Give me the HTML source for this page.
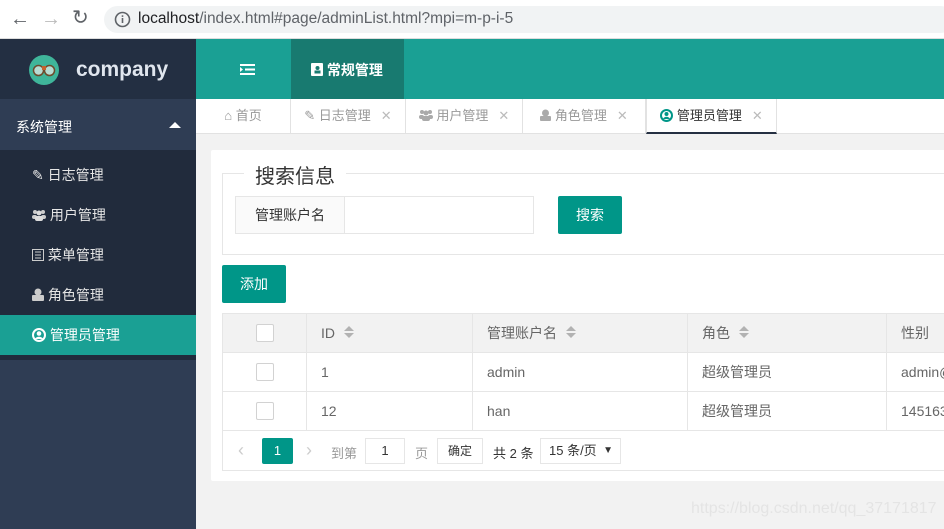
<!DOCTYPE html>
<html><head><meta charset="utf-8">
<style>
*{margin:0;padding:0;box-sizing:border-box}
body{width:944px;height:529px;overflow:hidden;position:relative;font-family:"Liberation Sans","Noto Sans CJK SC",sans-serif;font-size:14px;background:#f2f2f2;color:#333}
.abs{position:absolute}
.bar{left:0;top:0;width:944px;height:39px;background:#fff;border-bottom:1px solid #ddd}
.addr{left:104px;top:6px;width:850px;height:27px;background:#f1f3f4;border-radius:14px}
.url{left:138px;top:10px;font-size:15.5px;color:#202124}
.url span{color:#5f6368}
.logo{left:0;top:39px;width:196px;height:60px;background:#232f42}
.side{left:0;top:99px;width:196px;height:430px;background:#2f3d54}
.sub{left:0;top:150px;width:196px;height:210px;background:#212b3c}
.si{left:0;width:196px;height:40px;line-height:40px;padding-left:32px;color:#e6e6e6;font-size:14px}
.hdr{left:196px;top:39px;width:748px;height:60px;background:#1aa094}
.tabs{left:196px;top:99px;width:748px;height:35px;background:#fff;border-bottom:1px solid #e2e2e2}
.tab{top:99px;height:34px;line-height:33px;color:#999;font-size:13px;border-right:1px solid #e2e2e2;text-align:center}
.x{color:#bbb;margin-left:10px;font-size:13px}
.card{left:211px;top:150px;width:740px;height:331px;background:#fff;border-radius:2px}
.btn{background:#009688;color:#fff;text-align:center;border-radius:2px;font-size:14px}
td,th{border:1px solid #e6e6e6;height:39px;font-weight:normal;text-align:left;padding-left:14px;color:#666;font-size:14px}
th{background:#f2f2f2}
.cb{display:inline-block;width:18px;height:18px;border:1px solid #d2d2d2;border-radius:2px;background:#fff;vertical-align:middle}
.sort{display:inline-block;width:10px;height:14px;vertical-align:middle;margin-left:9px;position:relative;top:-1px}
.sort:before{content:"";position:absolute;left:0;top:0;border-left:5px solid transparent;border-right:5px solid transparent;border-bottom:5px solid #b2b2b2}
.sort:after{content:"";position:absolute;left:0;top:7px;border-left:5px solid transparent;border-right:5px solid transparent;border-top:5px solid #b2b2b2}
</style></head><body>
<div class="abs bar"></div>
<div class="abs" style="left:10px;top:9px;font-size:20px;color:#5f6368;line-height:20px">&#8592;</div>
<div class="abs" style="left:41px;top:9px;font-size:20px;color:#bbb;line-height:20px">&#8594;</div>
<div class="abs" style="left:72px;top:8px;font-size:20px;color:#5f6368;line-height:20px">&#8635;</div>
<div class="abs addr"></div>
<svg class="abs" style="left:114px;top:11px" width="17" height="17"><circle cx="8.5" cy="8.5" r="7" fill="none" stroke="#5f6368" stroke-width="1.6"/><rect x="7.7" y="7" width="1.6" height="5" fill="#5f6368"/><rect x="7.7" y="4.3" width="1.6" height="1.6" fill="#5f6368"/></svg>
<div class="abs url">localhost<span>/index.html#page/adminList.html?mpi=m-p-i-5</span></div>

<div class="abs logo"></div>
<svg class="abs" style="left:29px;top:55px" width="30" height="30"><circle cx="15" cy="15" r="15" fill="#3fb59a"/><circle cx="9.5" cy="15.5" r="5" fill="#b7dcd3" stroke="#6d4a2c" stroke-width="1.5"/><circle cx="20.5" cy="15.5" r="5" fill="#b7dcd3" stroke="#6d4a2c" stroke-width="1.5"/><rect x="13" y="11" width="4" height="4" fill="#c4622d"/></svg>
<div class="abs" style="left:76px;top:58px;font-size:21px;font-weight:bold;color:#e0e6ee">company</div>

<div class="abs side"></div>
<div class="abs" style="left:16px;top:117px;color:#fff;font-size:14px">系统管理</div>
<div class="abs" style="left:169px;top:122px;border:6px solid transparent;border-bottom:6px solid #fff;border-top:0"></div>
<div class="abs sub"></div>
<div class="abs si" style="top:155px">&#9998; 日志管理</div>
<div class="abs si" style="top:195px"><svg width="14" height="12" style="vertical-align:-1px"><circle cx="3" cy="3" r="2" fill="#ccc"/><circle cx="11" cy="3" r="2" fill="#ccc"/><circle cx="7" cy="4" r="2.5" fill="#ddd"/><rect x="0" y="6" width="5" height="4" rx="2" fill="#ccc"/><rect x="9" y="6" width="5" height="4" rx="2" fill="#ccc"/><rect x="3" y="7" width="8" height="5" rx="2" fill="#ddd"/></svg> 用户管理</div>
<div class="abs si" style="top:235px"><svg width="12" height="12" style="vertical-align:-1px"><rect x=".5" y=".5" width="11" height="11" fill="none" stroke="#ccc"/><path d="M3 3h6M3 6h6M3 9h6" stroke="#ccc"/></svg> 菜单管理</div>
<div class="abs si" style="top:275px"><svg width="12" height="13" style="vertical-align:-1px"><circle cx="6" cy="4" r="3.5" fill="#ccc"/><rect x="0" y="7" width="12" height="6" rx="1" fill="#ccc"/></svg> 角色管理</div>
<div class="abs" style="left:0;top:315px;width:196px;height:40px;background:#1aa094"></div>
<div class="abs si" style="top:315px;color:#fff"><svg width="14" height="14" style="vertical-align:-2px"><circle cx="7" cy="7" r="6" fill="none" stroke="#fff" stroke-width="2"/><circle cx="7" cy="5.5" r="2.3" fill="#fff"/><path d="M3 11c1-3 7-3 8 0" fill="#fff"/></svg> 管理员管理</div>

<div class="abs hdr"></div>
<svg class="abs" style="left:240px;top:64px" width="15" height="11"><path d="M0 1h15M5 5.5h10M0 10h15" stroke="#fff" stroke-width="2"/><path d="M0 3l3 2.5L0 8z" fill="#fff"/></svg>
<div class="abs" style="left:291px;top:39px;width:113px;height:60px;background:#187a70"></div>
<div class="abs" style="left:311px;top:60px;color:#fff;font-weight:bold;font-size:14px"><svg width="12" height="13" style="vertical-align:-1px"><rect width="12" height="13" rx="1" fill="#fff"/><circle cx="6.5" cy="5" r="2" fill="#187a70"/><rect x="3.5" y="7.5" width="6" height="3" fill="#187a70"/></svg> 常规管理</div>

<div class="abs tabs"></div>
<div class="abs tab" style="left:196px;width:95px">&#8962; 首页</div>
<div class="abs tab" style="left:291px;width:115px">&#9998; 日志管理<span class="x">✕</span></div>
<div class="abs tab" style="left:406px;width:117px"><svg width="14" height="12" style="vertical-align:-1px"><circle cx="3" cy="3" r="2" fill="#aaa"/><circle cx="11" cy="3" r="2" fill="#aaa"/><circle cx="7" cy="4" r="2.5" fill="#aaa"/><rect x="0" y="6" width="5" height="4" rx="2" fill="#aaa"/><rect x="9" y="6" width="5" height="4" rx="2" fill="#aaa"/><rect x="3" y="7" width="8" height="5" rx="2" fill="#aaa"/></svg> 用户管理<span class="x">✕</span></div>
<div class="abs tab" style="left:523px;width:123px"><svg width="11" height="12" style="vertical-align:-1px"><circle cx="5.5" cy="4" r="3.5" fill="#aaa"/><rect x="0" y="7" width="11" height="5" rx="1" fill="#aaa"/></svg> 角色管理<span class="x">✕</span></div>
<div class="abs tab" style="left:646px;width:131px;color:#333;border-left:1px solid #e2e2e2;border-bottom:2px solid #253042;height:35px"><svg width="13" height="13" style="vertical-align:-2px"><circle cx="6.5" cy="6.5" r="5.5" fill="none" stroke="#009688" stroke-width="2"/><circle cx="6.5" cy="5" r="2" fill="#009688"/><path d="M3 10c1-3 6-3 7 0" fill="#009688"/></svg> 管理员管理<span class="x">✕</span></div>

<div class="abs card"></div>
<div class="abs" style="left:222px;top:173px;width:730px;height:82px;border:1px solid #e6e6e6"></div>
<div class="abs" style="left:244px;top:160px;background:#fff;padding:0 11px;font-size:20px;color:#333">搜索信息</div>
<div class="abs" style="left:235px;top:196px;width:110px;height:38px;border:1px solid #e6e6e6;background:#fafafa;line-height:36px;text-align:center;font-size:14px;color:#333">管理账户名</div>
<div class="abs" style="left:344px;top:196px;width:190px;height:38px;border:1px solid #e6e6e6;background:#fff"></div>
<div class="abs btn" style="left:558px;top:196px;width:64px;height:38px;line-height:38px">搜索</div>
<div class="abs btn" style="left:222px;top:265px;width:64px;height:38px;line-height:38px">添加</div>

<table class="abs" style="left:222px;top:313px;border-collapse:collapse;width:740px">
<tr><th style="width:84px;text-align:center;padding:0"><span class="cb"></span></th><th style="width:166px">ID<span class="sort"></span></th><th style="width:215px">管理账户名<span class="sort"></span></th><th style="width:199px">角色<span class="sort"></span></th><th>性别</th></tr>
<tr><td style="text-align:center;padding:0"><span class="cb"></span></td><td>1</td><td>admin</td><td>超级管理员</td><td>admin@</td></tr>
<tr><td style="text-align:center;padding:0"><span class="cb"></span></td><td>12</td><td>han</td><td>超级管理员</td><td>145163</td></tr>
</table>
<div class="abs" style="left:222px;top:430px;width:730px;height:41px;border:1px solid #e6e6e6;border-top:0"></div>
<div class="abs" style="left:238px;top:440px;color:#ccc;font-size:18px">&#8249;</div>
<div class="abs btn" style="left:262px;top:438px;width:31px;height:26px;line-height:26px;font-size:13px">1</div>
<div class="abs" style="left:306px;top:440px;color:#ccc;font-size:18px">&#8250;</div>
<div class="abs" style="left:331px;top:443px;color:#999;font-size:13px">到第</div>
<div class="abs" style="left:365px;top:438px;width:40px;height:26px;border:1px solid #e6e6e6;text-align:center;line-height:24px;font-size:13px">1</div>
<div class="abs" style="left:415px;top:443px;color:#999;font-size:13px">页</div>
<div class="abs" style="left:437px;top:438px;width:46px;height:26px;border:1px solid #e6e6e6;text-align:center;line-height:24px;font-size:12px;color:#333">确定</div>
<div class="abs" style="left:493px;top:443px;color:#333;font-size:13px">共 2 条</div>
<div class="abs" style="left:540px;top:438px;width:81px;height:26px;border:1px solid #e6e6e6;line-height:24px;font-size:13px;padding-left:8px;color:#333">15 条/页<span style="position:absolute;right:7px;font-size:10px">▼</span></div>
<div class="abs" style="left:691px;top:500px;color:#e4e4e4;font-size:16px">https://blog.csdn.net/qq_37171817</div>
</body></html>
